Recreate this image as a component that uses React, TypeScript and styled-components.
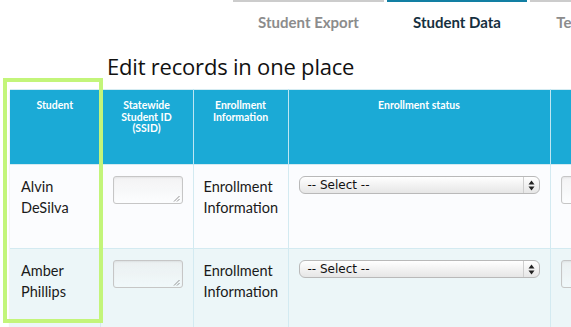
import styled, { createGlobalStyle } from "styled-components";

const GlobalStyle = createGlobalStyle`
  html, body {
    margin: 0;
    padding: 0;
    background: #ffffff;
    overflow: hidden;
  }
  body {
    font-family: "Lato", "Open Sans", sans-serif;
  }
`;

const students = [
  { first: "Alvin", last: "DeSilva" },
  { first: "Amber", last: "Phillips" },
];

const tabs = [
  { label: "Student Export", width: 151, active: false },
  { label: "Student Data", width: 140, active: true },
  { label: "Teacher Data", width: 140, active: false },
];

function SelectArrows() {
  return (
    <svg width="7" height="11" viewBox="0 0 7 11">
      <path d="M3.5 0.5 L6.5 4.5 L0.5 4.5 Z" fill="#222" />
      <path d="M3.5 10.5 L6.5 6.5 L0.5 6.5 Z" fill="#222" />
    </svg>
  );
}

function ResizeGrip() {
  return (
    <svg width="7" height="7" viewBox="0 0 7 7">
      <path d="M1 6.5 L6.5 1 M4 6.5 L6.5 4" stroke="#888" strokeWidth="0.9" />
    </svg>
  );
}

export default function App() {
  return (
    <Page>
      <GlobalStyle />
      <TabBar>
        {tabs.map((tab) => (
          <Tab key={tab.label} $active={tab.active} $width={tab.width}>
            {tab.label}
          </Tab>
        ))}
      </TabBar>
      <Title>Edit records in one place</Title>
      <TableWrap>
        <Table>
          <colgroup>
            <col style={{ width: 90 }} />
            <col style={{ width: 93 }} />
            <col style={{ width: 95 }} />
            <col style={{ width: 262 }} />
            <col style={{ width: 120 }} />
          </colgroup>
          <thead>
            <tr>
              <HeadCell>Student</HeadCell>
              <HeadCell>
                Statewide
                <br />
                Student ID
                <br />
                (SSID)
              </HeadCell>
              <HeadCell>
                Enrollment
                <br />
                Information
              </HeadCell>
              <HeadCell>Enrollment status</HeadCell>
              <HeadCell />
            </tr>
          </thead>
          <tbody>
            {students.map((s, i) => (
              <tr key={s.last}>
                <BodyCell $alt={i % 2 === 1} $pad={11}>
                  <CellText>
                    {s.first}
                    <br />
                    {s.last}
                  </CellText>
                </BodyCell>
                <BodyCell $alt={i % 2 === 1} $pad={12}>
                  <SmallField>
                    <GripSpot>
                      <ResizeGrip />
                    </GripSpot>
                  </SmallField>
                </BodyCell>
                <BodyCell $alt={i % 2 === 1} $pad={10}>
                  <CellText>
                    Enrollment
                    <br />
                    Information
                  </CellText>
                </BodyCell>
                <BodyCell $alt={i % 2 === 1} $pad={10}>
                  <FakeSelect>
                    <SelectLabel>-- Select --</SelectLabel>
                    <SelectButton>
                      <SelectArrows />
                    </SelectButton>
                  </FakeSelect>
                </BodyCell>
                <BodyCell $alt={i % 2 === 1} $pad={10}>
                  <SmallField />
                </BodyCell>
              </tr>
            ))}
          </tbody>
        </Table>
        <Highlight />
      </TableWrap>
    </Page>
  );
}

const Page = styled.div`
  width: 571px;
  height: 327px;
  overflow: hidden;
  position: relative;
`;

const TabBar = styled.div`
  display: flex;
  gap: 3px;
  padding-left: 233px;
`;

const Tab = styled.div<{ $active: boolean; $width: number }>`
  flex: 0 0 ${({ $width }) => $width}px;
  height: 42px;
  box-sizing: border-box;
  border-top: 2px solid ${({ $active }) => ($active ? "#127fa3" : "#cccccc")};
  padding-top: 11px;
  text-align: center;
  white-space: nowrap;
  font-size: 15px;
  font-weight: 700;
  color: ${({ $active }) => ($active ? "#16303f" : "#8c8c8c")};
`;

const Title = styled.h1`
  margin: 10px 0 0 107px;
  font-family: "Open Sans", sans-serif;
  font-size: 22px;
  font-weight: 400;
  line-height: 28px;
  color: #111111;
  letter-spacing: -0.2px;
`;

const TableWrap = styled.div`
  position: relative;
  margin-top: 9px;
  padding-left: 10px;
`;

const Table = styled.table`
  table-layout: fixed;
  border-collapse: collapse;
  width: 660px;
  border-top: 1px solid #d5ecf2;
  box-shadow: 0 2px 2px rgba(0, 0, 0, 0.15);
`;

const HeadCell = styled.th`
  height: 75px;
  box-sizing: border-box;
  padding: 10px 4px 0;
  vertical-align: top;
  background: #1baad6;
  border-left: 1px solid #bfe6f3;
  color: #ffffff;
  font-size: 10.5px;
  font-weight: 700;
  line-height: 11.5px;
  text-align: center;

  &:first-child {
    border-left: none;
  }
`;

const BodyCell = styled.td<{ $alt: boolean; $pad: number }>`
  height: 84px;
  box-sizing: border-box;
  padding: 11px 4px 0 ${({ $pad }) => $pad}px;
  vertical-align: top;
  background: ${({ $alt }) => ($alt ? "#ecf6f8" : "#fbfcfe")};
  border-left: 1px solid #d3eaf1;
  border-top: 1px solid #d3eaf1;

  &:first-child {
    border-left: none;
  }
`;

const CellText = styled.div`
  font-size: 14.5px;
  line-height: 21px;
  color: #1a1a1a;
`;

const SmallField = styled.div`
  position: relative;
  width: 70px;
  height: 28px;
  box-sizing: border-box;
  border: 1px solid #c6c6c6;
  border-radius: 3px;
  background: linear-gradient(rgba(235, 235, 235, 0.5), rgba(255, 255, 255, 0.2));
  box-shadow: inset 0 1px 2px rgba(0, 0, 0, 0.06);
`;

const GripSpot = styled.div`
  position: absolute;
  right: 2px;
  bottom: 1px;
  display: flex;
`;

const FakeSelect = styled.div`
  display: flex;
  align-items: center;
  width: 241px;
  height: 18px;
  box-sizing: border-box;
  border: 1px solid #b9b9b9;
  border-radius: 6px;
  background: linear-gradient(#ffffff, #e6e6e6);
  overflow: hidden;
`;

const SelectLabel = styled.span`
  flex: 1;
  padding-left: 8px;
  font-family: "DejaVu Sans", sans-serif;
  font-size: 12px;
  line-height: 16px;
  color: #111111;
`;

const SelectButton = styled.span`
  display: flex;
  align-items: center;
  justify-content: center;
  width: 15px;
  height: 100%;
  border-left: 1px solid #cfcfcf;
`;

const Highlight = styled.div`
  position: absolute;
  left: 3px;
  top: -11px;
  width: 100px;
  height: 245px;
  box-sizing: border-box;
  border: 4px solid #c3f57a;
  pointer-events: none;
`;
